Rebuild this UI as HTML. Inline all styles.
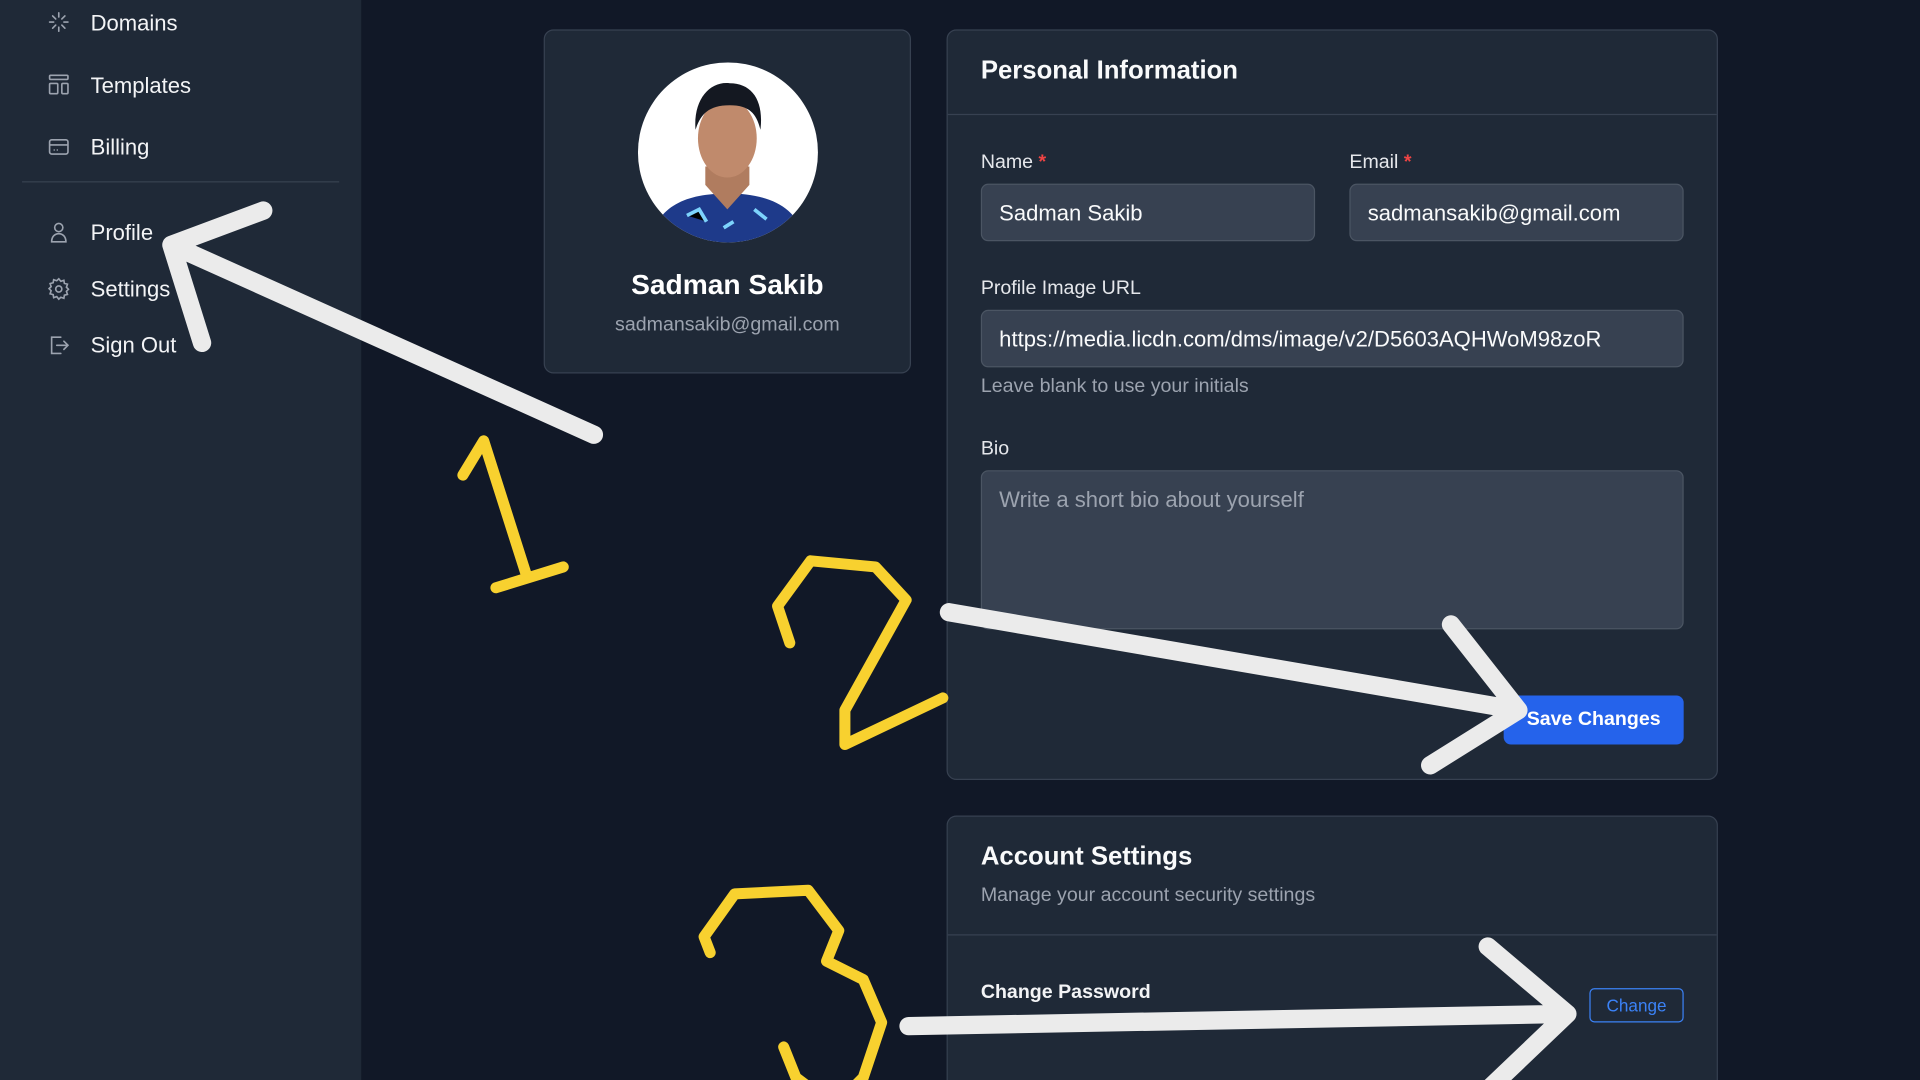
<!DOCTYPE html>
<html><head><meta charset="utf-8"><style>
*{box-sizing:border-box;margin:0;padding:0}
html,body{width:1920px;height:1080px;overflow:hidden;background:#111827;position:relative}
#o{position:absolute;left:0;top:0;width:1920px;height:1080px;overflow:hidden}
#w{position:absolute;left:0;top:0;width:1568px;height:882px;overflow:hidden;transform:scale(1.22449);transform-origin:0 0;font-family:"Liberation Sans",sans-serif;color:#f3f4f6}
.a{position:absolute}
.side{left:0;top:0;width:295px;height:882px;background:#1f2937}
.nav{position:absolute;left:74px;font-size:18px;color:#f3f4f6;line-height:20px}
.ic{position:absolute;left:38px;width:20px;height:20px}
.card{background:#1f2937;border:1px solid #374151;border-radius:8px}
.lbl{font-size:16px;font-weight:500;color:#e5e7eb}
.lbl b{color:#ef4444;font-weight:700}
.inp{background:#374151;border:1px solid #4b5563;border-radius:6px;font-size:18px;color:#f9fafb;padding-left:14px;line-height:46px;white-space:nowrap;overflow:hidden}
</style></head><body><div id="o"><div id="w">
<div class="a side"></div>
<svg class="ic" style="top:8px" viewBox="0 0 24 24" fill="none" stroke="#9ca3af" stroke-width="1.6" stroke-linecap="round"><path d="M12 3v4M12 17v4M3 12h4M17 12h4M6 6l3 3M15 15l3 3M18 6l-3 3M9 15l-3 3"/></svg>
<div class="nav" style="top:9px">Domains</div>
<svg class="ic" style="top:59px" viewBox="0 0 24 24" fill="none" stroke="#9ca3af" stroke-width="1.6"><rect x="3" y="3" width="18" height="4" rx="1"/><rect x="3" y="11" width="8" height="10" rx="1"/><rect x="15" y="11" width="6" height="10" rx="1"/></svg>
<div class="nav" style="top:60px">Templates</div>
<svg class="ic" style="top:110px" viewBox="0 0 24 24" fill="none" stroke="#9ca3af" stroke-width="1.6"><rect x="3" y="5" width="18" height="14" rx="2"/><path d="M3 10h18M7 15h1M10 15h1"/></svg>
<div class="nav" style="top:110px">Billing</div>
<div class="a" style="left:18px;top:148px;width:259px;height:1px;background:#374151"></div>
<svg class="ic" style="top:180px" viewBox="0 0 24 24" fill="none" stroke="#9ca3af" stroke-width="1.6"><circle cx="12" cy="7" r="4"/><path d="M5 21c0-5 3-8 7-8s7 3 7 8z"/></svg>
<div class="nav" style="top:180px">Profile</div>
<svg class="ic" style="top:226px" viewBox="0 0 24 24" fill="none" stroke="#9ca3af" stroke-width="1.6"><circle cx="12" cy="12" r="3"/><path d="M12 2l2 2.5 3-1 .5 3 3 .8-1 3 2 2-2 2 1 3-3 .8-.5 3-3-1L12 22l-2-2.5-3 1-.5-3-3-.8 1-3-2-2 2-2-1-3 3-.8.5-3 3 1z"/></svg>
<div class="nav" style="top:226px">Settings</div>
<svg class="ic" style="top:272px" viewBox="0 0 24 24" fill="none" stroke="#9ca3af" stroke-width="1.6" stroke-linecap="round"><path d="M14 4H5v16h9M10 12h11M17 8l4 4-4 4"/></svg>
<div class="nav" style="top:272px">Sign Out</div>

<div class="a card" style="left:444px;top:24px;width:300px;height:281px"></div>
<svg class="a" style="left:521px;top:51px" width="147" height="147" viewBox="0 0 147 147"><defs><clipPath id="c"><circle cx="73.5" cy="73.5" r="73.5"/></clipPath></defs><g clip-path="url(#c)"><rect width="147" height="147" fill="#fff"/><path d="M10 147c5-30 30-40 63-40s58 10 64 40z" fill="#1e3a8a"/><path d="M55 100l18 20 18-20v-15H55z" fill="#b07c5f"/><ellipse cx="73" cy="62" rx="24" ry="32" fill="#c08a6c"/><path d="M47 55c-2-25 12-40 28-38 18 0 28 14 25 38-3-12-8-20-25-20-18 0-24 8-28 20z" fill="#141821"/><path d="M40 125l10-5 6 10M95 120l10 8M70 135l8-5" stroke="#7dd3fc" stroke-width="3"/></g></svg>
<div class="a" style="left:444px;top:219px;width:300px;text-align:center;font-size:23px;font-weight:700;color:#fff">Sadman Sakib</div>
<div class="a" style="left:444px;top:257px;width:300px;text-align:center;font-size:16px;color:#9ca3af">sadmansakib@gmail.com</div>

<div class="a card" style="left:773px;top:24px;width:630px;height:613px"></div>
<div class="a" style="left:801px;top:46px;font-size:21px;font-weight:600;color:#f9fafb">Personal Information</div>
<div class="a" style="left:774px;top:93px;width:628px;height:1px;background:#374151"></div>
<div class="a lbl" style="left:801px;top:124px">Name <b>*</b></div>
<div class="a lbl" style="left:1102px;top:124px">Email <b>*</b></div>
<div class="a inp" style="left:801px;top:150px;width:273px;height:47px">Sadman Sakib</div>
<div class="a inp" style="left:1102px;top:150px;width:273px;height:47px">sadmansakib@gmail.com</div>
<div class="a lbl" style="left:801px;top:227px">Profile Image URL</div>
<div class="a inp" style="left:801px;top:253px;width:574px;height:47px">https://media.licdn.com/dms/image/v2/D5603AQHWoM98zoR</div>
<div class="a" style="left:801px;top:307px;font-size:16px;color:#9ca3af">Leave blank to use your initials</div>
<div class="a lbl" style="left:801px;top:358px">Bio</div>
<div class="a inp" style="left:801px;top:384px;width:574px;height:130px;line-height:20px;padding-top:13px;color:#9ca3af">Write a short bio about yourself</div>
<div class="a" style="left:1228px;top:568px;width:147px;height:40px;background:#2563eb;border-radius:6px;color:#fff;font-size:16px;font-weight:600;text-align:center;line-height:40px">Save Changes</div>

<div class="a card" style="left:773px;top:666px;width:630px;height:216px;border-bottom:none;border-radius:8px 8px 0 0"></div>
<div class="a" style="left:801px;top:688px;font-size:21px;font-weight:600;color:#f9fafb">Account Settings</div>
<div class="a" style="left:801px;top:723px;font-size:16px;color:#9ca3af">Manage your account security settings</div>
<div class="a" style="left:774px;top:763px;width:628px;height:1px;background:#374151"></div>
<div class="a" style="left:801px;top:802px;font-size:16px;font-weight:600;color:#f3f4f6">Change Password</div>
<div class="a" style="left:1298px;top:807px;width:77px;height:28px;border:1px solid #3b82f6;border-radius:4px;color:#3b82f6;font-size:14px;text-align:center;line-height:26px">Change</div>

<svg class="a" style="left:0;top:0" width="1568" height="882" fill="none" stroke-linecap="round" stroke-linejoin="round">
<g stroke="#ebebeb" stroke-width="15">
<path d="M485 355L140 200M215 172L140 200L165 280"/>
<path d="M775 500L1240 580M1185 510L1240 580L1168 625"/>
<path d="M742 838L1280 828M1215 773L1280 828L1215 890"/>
</g>
<g stroke="#f8d12f" stroke-width="9">
<path d="M378 388L395 360L430 470M405 480L460 463"/>
<path d="M645 525L635 495L662 458L715 463L740 490L690 580L690 608L770 570"/>
<path d="M580 778L575 765L600 730L660 727L685 760L675 785L705 800L720 835L705 880L690 895M640 855L650 880L670 895"/>
</g>
</svg>
</div></div></body></html>
